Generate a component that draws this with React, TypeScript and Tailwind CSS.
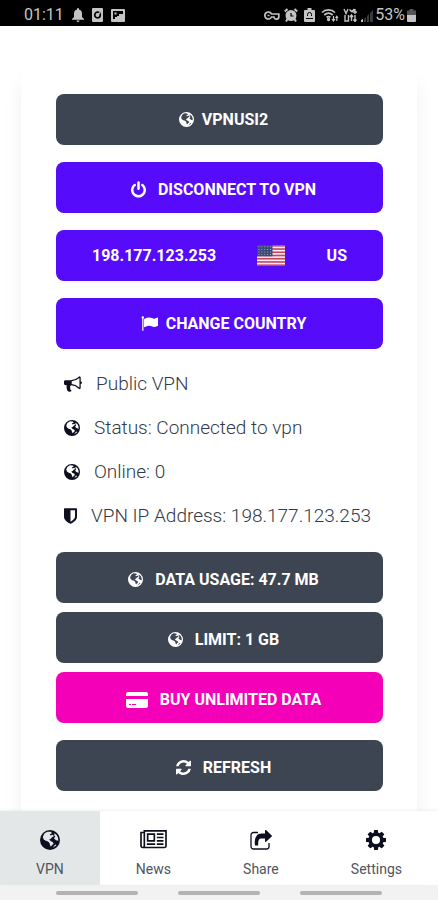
import React from 'react';

type IconProps = { className?: string };

const GlobeIcon = ({ className }: IconProps) => (
  <svg viewBox="0 0 24 24" className={className} fill="currentColor" fillRule="evenodd" aria-hidden="true">
    <path d="M12 0a12 12 0 1 1 0 24a12 12 0 0 1 0-24zM5 4.600L3.400 8.400L4.400 11.400L7 13L9.600 13.800L11.400 15.600L12 18L13 20L14.600 18L16.400 16.400L15.400 14.600L12.400 13L11 11.400L13 10.400L14.400 8.600L16.800 7.600L15.400 5.600L12.800 6.600L11.800 5.200L14.600 3.800L12.800 2.200L9 2L6.600 3.200zM17.400 4L20.200 6.200L21.600 9.200L22 13L19.200 12.400L16.600 10L18.400 8L17 6.200zM15.200 21.400L18.200 17.400L19.800 18.400z" />
  </svg>
);

const PowerIcon = ({ className }: IconProps) => (
  <svg viewBox="128 0 1536 1792" className={className} fill="currentColor" aria-hidden="true">
    <path d="M1664 896q0 156-61 298t-164 245-245 164-298 61-298-61-245-164-164-245-61-298q0-182 80.5-343t226.5-270q43-32 95.5-25t83.5 50q32 42 24.5 94.5t-49.5 84.5q-98 74-151.5 181t-53.5 228q0 104 40.5 198.5t109.5 163.5 163.5 109.5 198.5 40.5 198.5-40.5 163.5-109.5 109.5-163.5 40.5-198.5q0-121-53.5-228t-151.5-181q-42-32-49.5-84.5t24.5-94.5q31-43 84-50t95 25q146 109 226.5 270t80.5 343zm-640-768v640q0 52-38 90t-90 38-90-38-38-90v-640q0-52 38-90t90-38 90 38 38 90z" />
  </svg>
);

const FlagIcon = ({ className }: IconProps) => (
  <svg viewBox="0 0 1792 1792" className={className} fill="currentColor" aria-hidden="true">
    <path d="M320 256q0 72-64 110v1266q0 13-9.5 22.5t-22.5 9.5h-64q-13 0-22.5-9.5t-9.5-22.5v-1266q-64-38-64-110 0-53 37.5-90.5t90.5-37.5 90.5 37.5 37.5 90.5zm1472 64v763q0 25-12.5 38.5t-39.5 27.5q-215 116-369 116-61 0-123.5-22t-108.5-48-115.5-48-142.5-22q-192 0-464 146-17 9-33 9-26 0-45-19t-19-45v-742q0-32 31-55 21-14 79-43 236-120 421-120 107 0 200 29t219 88q38 19 88 19 54 0 117.5-21t110-47 88-47 54.5-21q26 0 45 19t19 45z" />
  </svg>
);

const BullhornIcon = ({ className }: IconProps) => (
  <svg viewBox="0 0 1792 1792" className={className} fill="currentColor" aria-hidden="true">
    <path d="M1664 640q53 0 90.5 37.5t37.5 90.5-37.5 90.5-90.5 37.5v384q0 52-38 90t-90 38q-417-347-812-380-58 19-91 66t-31 100.5 40 92.5q-20 33-23 65.5t6 58 33.5 55 48 50 61.5 50.5q-29 58-111.5 83t-168.5 11.5-132-55.5q-7-23-29.5-87.5t-32-94.5-23-89-15-101 3.5-98.5 22-110.5h-122q-66 0-113-47t-47-113v-192q0-66 47-113t113-47h480q435 0 896-384 52 0 90 38t38 90v384zm-128 604v-954q-394 302-768 343v270q377 42 768 341z" />
  </svg>
);

const ShieldIcon = ({ className }: IconProps) => (
  <svg viewBox="256 128 1280 1536" className={className} fill="currentColor" aria-hidden="true">
    <path d="M1344 960v-640h-448v1137q119-63 213-137 235-184 235-360zm192-768v768q0 86-33.5 170.5t-83 150-118 127.5-126.5 103-121 77.5-89.5 49.5-42.5 20q-12 6-26 6t-26-6q-16-7-42.5-20t-89.5-49.5-121-77.5-126.5-103-118-127.5-83-150-33.5-170.5v-768q0-26 19-45t45-19h1152q26 0 45 19t19 45z" />
  </svg>
);

const CardIcon = ({ className }: IconProps) => (
  <svg viewBox="0 0 22 16" className={className} fill="currentColor" fillRule="evenodd" aria-hidden="true">
    <path d="M2 0h18a2 2 0 0 1 2 2v2H0V2a2 2 0 0 1 2-2zM0 7h22v7a2 2 0 0 1-2 2H2a2 2 0 0 1-2-2zM3 12v1h2v-1zM6 12v1h4v-1z" />
  </svg>
);

const RefreshIcon = ({ className }: IconProps) => (
  <svg viewBox="128 128 1536 1536" className={className} fill="currentColor" aria-hidden="true">
    <path d="M1639 1056q0 5-1 7-64 268-268 434.5t-478 166.5q-146 0-282.5-55t-243.5-157l-129 129q-19 19-45 19t-45-19-19-45v-448q0-26 19-45t45-19h448q26 0 45 19t19 45-19 45l-137 137q71 66 161 102t187 36q134 0 250-65t186-179q11-17 53-117 8-23 30-23h192q13 0 22.5 9.5t9.5 22.5zm25-800v448q0 26-19 45t-45 19h-448q-26 0-45-19t-19-45 19-45l138-138q-148-137-349-137-134 0-250 65t-186 179q-11 17-53 117-8 23-30 23h-199q-13 0-22.5-9.5t-9.5-22.5v-7q65-268 270-434.5t480-166.5q146 0 284 55.5t245 156.5l130-129q19-19 45-19t45 19 19 45z" />
  </svg>
);

const NewsIcon = ({ className }: IconProps) => (
  <svg viewBox="0 128 2048 1536" className={className} fill="currentColor" aria-hidden="true">
    <path d="M1024 512h-384v384h384v-384zm128 640v128h-640v-128h640zm0-768v640h-640v-640h640zm640 768v128h-512v-128h512zm0-256v128h-512v-128h512zm0-256v128h-512v-128h512zm0-256v128h-512v-128h512zm-1536 960v-960h-128v960q0 26 19 45t45 19 45-19 19-45zm1664 0v-1088h-1536v1088q0 33-11 64h1483q26 0 45-19t19-45zm128-1216v1216q0 80-56 136t-136 56h-1664q-80 0-136-56t-56-136v-1088h256v-128h1792z" />
  </svg>
);

const ShareIcon = ({ className }: IconProps) => (
  <svg viewBox="0 0 22 20" className={className} aria-hidden="true">
    <path d="M8 2.500H3.500a2.500 2.500 0 0 0-2.500 2.500v11.500A2.500 2.500 0 0 0 3.500 19h13a2.500 2.500 0 0 0 2.500-2.500V13" fill="none" stroke="currentColor" strokeWidth="1.300" />
    <path d="M15 .4c0-.5.6-.6 1-.3L21.700 5.500c.3.300.3.700 0 1L16 11.700c-.4.400-1 .2-1-.3V8.600h-3.500C8.500 8.600 8 11 8.200 15.500H5C4 8 6.500 3.400 11.500 3.400H15z" fill="currentColor" />
  </svg>
);

const CogIcon = ({ className }: IconProps) => (
  <svg viewBox="128 128 1536 1536" className={className} fill="currentColor" fillRule="evenodd" aria-hidden="true">
    <path d="M1206 896a310 310 0 1 0-620 0a310 310 0 1 0 620 0zM1664 787v222q0 12-8 23t-20 13l-185 28q-19 54-39 91 35 50 107 138 10 12 10 25t-9 23q-27 37-99 108t-94 71q-12 0-26-9l-138-108q-44 23-91 38-16 136-29 186-7 28-36 28h-222q-14 0-24.5-8.5t-11.5-21.5l-28-184q-49-16-90-37l-141 107q-10 9-25 9-14 0-25-11-126-114-165-168-7-10-7-23 0-12 8-23 15-21 51-66.5t54-70.5q-27-50-41-99l-183-27q-13-2-21-12.5t-8-23.5v-222q0-12 8-23t19-13l186-28q14-46 39-92-40-57-107-138-10-12-10-24 0-10 9-23 26-36 98.5-107.5t94.5-71.5q13 0 26 10l138 107q44-23 91-38 16-136 29-186 7-28 36-28h222q14 0 24.5 8.5t11.5 21.5l28 184q49 16 90 37l142-107q9-9 24-9 13 0 25 10 129 119 165 170 7 8 7 22 0 12-8 23-15 21-51 66.5t-54 70.5q26 50 41 98l183 28q13 2 21 12.5t8 23.5z" />
  </svg>
);

const UsFlag = ({ className }: IconProps) => (
  <svg viewBox="0 0 28 21" className={className} role="img" aria-label="United States">
    <rect width="28" height="21" fill="#f4eef6" />
    {[0, 1, 2, 3, 4, 5, 6].map((i) => (
      <rect key={i} y={i * 3.23} width="28" height="1.62" fill="#c8455f" />
    ))}
    <rect width="15.5" height="11.3" fill="#3c4a78" />
    {[0, 1, 2, 3].map((row) =>
      [0, 1, 2, 3, 4].map((col) => (
        <circle key={`${row}-${col}`} cx={2 + col * 2.9} cy={1.8 + row * 2.6} r="0.5" fill="#b9c0d6" />
      ))
    )}
  </svg>
);

const StatusBar = () => (
  <header className="flex h-[26px] items-center justify-between bg-black pt-1 pr-[22px] pl-6 text-[#c4c4c4]">
    <div className="flex items-center">
      <span className="text-base leading-5">01:11</span>
      <svg viewBox="0 0 12 14" className="ml-2 h-[14px] w-3" fill="currentColor" aria-hidden="true">
        <path d="M6 0a1 1 0 0 1 1 1v.6c2 .5 3 2 3 4V9l2 2v.8H0V11l2-2V5.600C2 3.600 3 2.100 5 1.600V1a1 1 0 0 1 1-1zM4.500 12.500h3a1.500 1.500 0 0 1-3 0z" />
      </svg>
      <svg viewBox="0 0 11 14" className="ml-2 h-[14px] w-[11px]" aria-hidden="true">
        <rect width="11" height="14" rx="1" fill="currentColor" />
        <circle cx="5.500" cy="7" r="2.800" fill="none" stroke="#000" strokeWidth="1.700" />
        <path d="M5.500 7L8 4.500" stroke="currentColor" strokeWidth="1.200" />
      </svg>
      <svg viewBox="0 0 14 13" className="ml-2 h-[13px] w-[14px]" aria-hidden="true">
        <rect width="14" height="13" rx="1" fill="currentColor" />
        <path d="M2 2h10v3H8v2H6v1H4v2H2zM3.500 3.500v2h2v-2z" fill="#000" fillRule="evenodd" />
      </svg>
    </div>
    <div className="flex items-center">
      <svg viewBox="0 0 16 9" className="h-[9px] w-4" fill="none" stroke="currentColor" strokeWidth="1.700" aria-hidden="true">
        <path d="M7.500 3A3.500 3.500 0 1 0 7.500 6H10a2.200 2.200 0 0 0 4.800-.5V3H7.500zM3.500 4.500h2" />
      </svg>
      <svg viewBox="0 0 14 14" className="ml-1 h-[14px] w-[14px]" fill="none" stroke="currentColor" strokeWidth="2" aria-hidden="true">
        <circle cx="7" cy="7.500" r="4.500" fill="currentColor" />
        <path d="M.8 3.500L3.500 1M13.200 3.500L10.500 1M3.500 11L2 13.500M10.500 11L12 13.500" />
        <path d="M7 5v3h2.500" stroke="#000" strokeWidth="1.200" />
      </svg>
      <svg viewBox="0 0 11 14" className="ml-[6px] h-[14px] w-[11px]" aria-hidden="true">
        <path d="M3.500 0h4v2H10a1 1 0 0 1 1 1v10a1 1 0 0 1-1 1H1a1 1 0 0 1-1-1V3a1 1 0 0 1 1-1h2.500z" fill="currentColor" />
        <path d="M3.500 8V6.500a2 2 0 0 1 4 0V8M2 10.500h7" stroke="#000" strokeWidth="1" fill="none" />
      </svg>
      <svg viewBox="0 0 18 14" className="ml-[6px] h-[14px] w-[18px]" fill="none" stroke="currentColor" strokeWidth="1.700" aria-hidden="true">
        <path d="M1 4.500C4.500 1 10.500 1 14 4.500M3.300 7C5.800 4.700 9.200 4.700 11.700 7M5.500 9.300c1.300-1 2.700-1 4 0" />
        <circle cx="7.500" cy="11.500" r=".8" fill="currentColor" />
        <path d="M12.500 8v4.500M11 11l1.500 2 1.500-2M15.800 13V8.500M14.500 10l1.300-1.700L17 10" strokeWidth="1.200" />
      </svg>
      <svg viewBox="0 0 14 14" className="ml-1 h-[14px] w-[14px]" fill="none" stroke="currentColor" strokeWidth="1.400" aria-hidden="true">
        <path d="M1 1l2 4.500L5 1M6.500 1.500l2 2 3-2.500M12 1v5M9.500 4H14M2 7v6h3.500V7M8.500 13V7M7 9l1.500-2L10 9M12 7v6M10.500 11.500l1.500 2 1.500-2" />
      </svg>
      <svg viewBox="0 0 12 13" className="ml-1 h-[13px] w-3" aria-hidden="true">
        <path d="M3 10l2-2v5H3zM6 7l2-2v8H6zM9 4l3-3v12H9z" fill="#3a3a3a" />
        <path d="M0 13v-2l2-1v3z" fill="currentColor" />
      </svg>
      <span className="ml-[2px] text-base leading-5">53%</span>
      <svg viewBox="0 0 9 13" className="ml-[2px] h-[13px] w-[9px]" aria-hidden="true">
        <path d="M2.500 0h4v1.500H9V6H0V1.500h2.500z" fill="#555" />
        <path d="M0 6h9v6a1 1 0 0 1-1 1H1a1 1 0 0 1-1-1z" fill="currentColor" />
      </svg>
    </div>
  </header>
);

const buttonBase = 'flex h-[51px] w-full items-center rounded-lg text-base font-bold text-white';

const infoRows = [
  { icon: <BullhornIcon className="mr-[14px] size-[18px] text-[#0d0f1f]" />, text: 'Public VPN' },
  { icon: <GlobeIcon className="mr-[14px] size-4 text-[#0d0f1f]" />, text: 'Status: Connected to vpn' },
  { icon: <GlobeIcon className="mr-[14px] size-4 text-[#0d0f1f]" />, text: 'Online: 0' },
  { icon: <ShieldIcon className="mr-[14px] h-4 w-[13px] text-[#0d0f1f]" />, text: 'VPN IP Address: 198.177.123.253' },
];

const tabs = [
  { label: 'VPN', icon: <GlobeIcon className="size-5" />, active: true },
  { label: 'News', icon: <NewsIcon className="h-5 w-[27px]" />, active: false },
  { label: 'Share', icon: <ShareIcon className="h-5 w-[22px]" />, active: false },
  { label: 'Settings', icon: <CogIcon className="size-5" />, active: false },
];

export default function App() {
  return (
    <div className="flex min-h-screen flex-col bg-white font-[Roboto,sans-serif] text-[#343a46]">
      <StatusBar />

      <main className="flex flex-1 flex-col px-[21px] pt-10">
        <section className="flex-1 rounded-t-lg bg-white pt-7 pr-[34px] pb-5 pl-[35px] shadow-[0_16px_20px_rgba(0,0,0,0.06)]">
          <div className="flex flex-col gap-[17px]">
            <button className={`${buttonBase} justify-center bg-[#3e4552] pl-2`}>
              <GlobeIcon className="mr-2 size-[15px]" />
              VPNUSI2
            </button>
            <button className={`${buttonBase} justify-center bg-[#560bfb] pt-1 pl-2`}>
              <PowerIcon className="mr-3 h-[18px] w-[15px]" />
              DISCONNECT TO VPN
            </button>
            <button className={`${buttonBase} justify-between bg-[#560bfb] px-9`}>
              <span>198.177.123.253</span>
              <UsFlag className="h-[21px] w-7" />
              <span>US</span>
            </button>
            <button className={`${buttonBase} justify-center bg-[#560bfb] pl-2`}>
              <FlagIcon className="mr-2 size-[17px]" />
              CHANGE COUNTRY
            </button>
          </div>

          <ul className="mt-[13px] mb-[14px] pl-2 text-[19px] font-light">
            {infoRows.map((row) => (
              <li key={row.text} className="flex h-11 items-center whitespace-nowrap">
                {row.icon}
                {row.text}
              </li>
            ))}
          </ul>

          <div className="flex flex-col gap-[9px]">
            <button className={`${buttonBase} justify-center bg-[#3e4552] pt-1 pl-2`}>
              <GlobeIcon className="mr-3 size-[15px]" />
              DATA USAGE: 47.7 MB
            </button>
            <button className={`${buttonBase} justify-center bg-[#3e4552] pt-1 pl-2`}>
              <GlobeIcon className="mr-3 size-[15px]" />
              LIMIT: 1 GB
            </button>
            <button className={`${buttonBase} justify-center bg-[#f400b8] pt-1 pl-2`}>
              <CardIcon className="mr-3 h-4 w-[22px]" />
              BUY UNLIMITED DATA
            </button>
          </div>
          <button className={`${buttonBase} mt-[17px] justify-center bg-[#3e4552] pt-1 pl-2`}>
            <RefreshIcon className="mr-3 size-[15px]" />
            REFRESH
          </button>
        </section>
      </main>

      <nav className="relative flex h-[74px] rounded-b-lg bg-white shadow-[0_-1px_3px_rgba(0,0,0,0.06)]">
        {tabs.map((tab) => (
          <a
            key={tab.label}
            href="#"
            className={`flex flex-auto flex-col items-center justify-end gap-[9px] pb-[6px] text-sm leading-5 text-[#50555f] ${tab.active ? 'bg-[#e4e7e7]' : ''}`}
          >
            <span className="text-[#0d0f1f]">{tab.icon}</span>
            {tab.label}
          </a>
        ))}
      </nav>

      <footer className="flex h-[15px] justify-center gap-10 bg-[#f2f2f2] pt-[6px]">
        <span className="h-1 w-[82px] rounded-full bg-[#b3b3b3]" />
        <span className="h-1 w-[82px] rounded-full bg-[#b3b3b3]" />
        <span className="h-1 w-[82px] rounded-full bg-[#b3b3b3]" />
      </footer>
    </div>
  );
}
